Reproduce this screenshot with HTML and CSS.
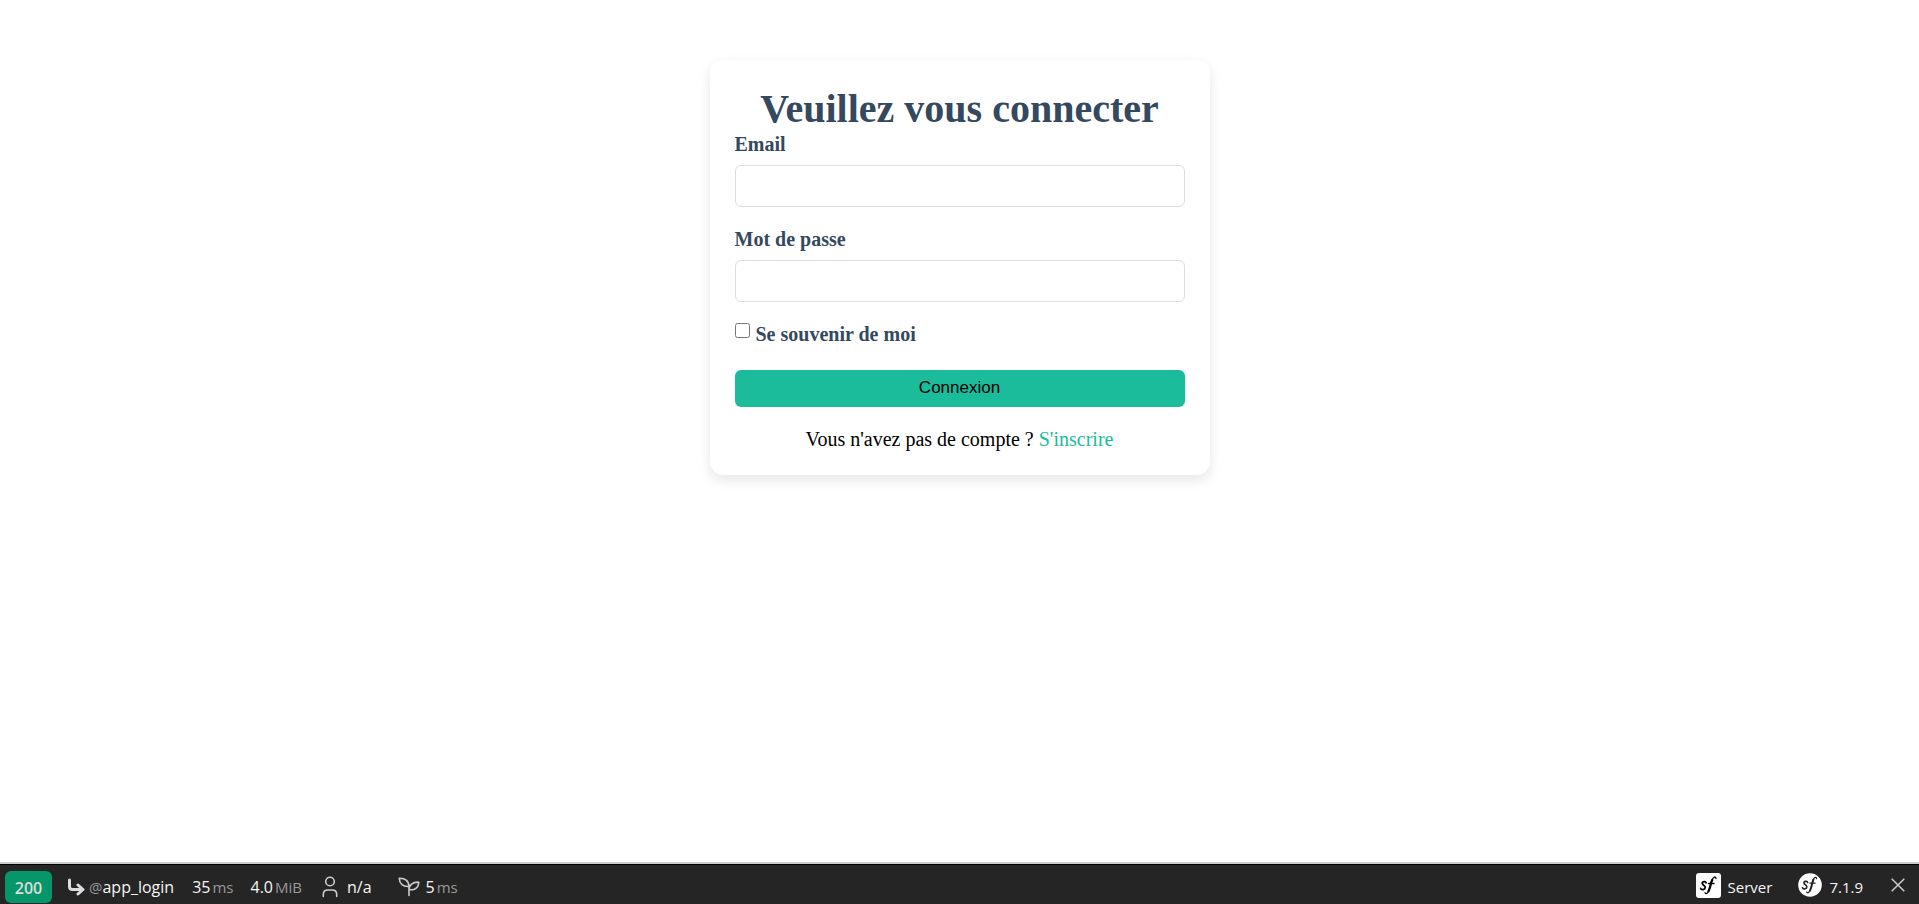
FILE: index.html
```html
<!DOCTYPE html>
<html lang="fr">
<head>
<meta charset="utf-8">
<title>Connexion</title>
<link rel="stylesheet" href="styles.css">
</head>
<body>
<main class="login">
  <form class="login-card">
    <h1 class="login-title">Veuillez vous connecter</h1>
    <div class="field">
      <label class="field-label" for="email">Email</label>
      <input class="field-input" id="email" type="email" name="email">
    </div>
    <div class="field">
      <label class="field-label" for="password">Mot de passe</label>
      <input class="field-input" id="password" type="password" name="password">
    </div>
    <div class="remember">
      <input class="remember-box" id="remember" type="checkbox" name="remember">
      <label class="remember-label" for="remember">Se souvenir de moi</label>
    </div>
    <button class="submit" type="submit">Connexion</button>
    <p class="signup">Vous n'avez pas de compte ? <a class="signup-link" href="#">S'inscrire</a></p>
  </form>
</main>
<footer class="toolbar">
  <div class="toolbar-group toolbar-metrics">
    <span class="status">200</span>
    <span class="item item-route">
      <svg viewBox="0 0 18 18" width="18" height="18" fill="none" stroke="#ddd" stroke-width="3" stroke-linecap="round" stroke-linejoin="round"><path d="M2.500 2v6.500q0 3 3 3H15M11 7l5 4.500-5 4.500"/></svg>
      <span><span class="at">@</span><span class="value">app_login</span></span>
    </span>
    <span class="item item-time"><span><span class="value">35</span><span class="unit">ms</span></span></span>
    <span class="item item-memory"><span><span class="value">4.0</span><span class="unit">MiB</span></span></span>
    <span class="item item-user">
      <svg viewBox="0 0 16 22" width="16" height="22" fill="none" stroke="#ccc" stroke-width="1.600" stroke-linecap="round"><circle cx="8" cy="5.500" r="4.300"/><path d="M1.300 20.500v-2q0-4.500 4.500-4.500h4.400q4.500 0 4.500 4.500v2"/></svg>
      <span class="value">n/a</span>
    </span>
    <span class="item item-twig">
      <svg viewBox="0 0 22 20" width="22" height="20" fill="none" stroke="#ccc" stroke-width="1.600" stroke-linecap="round" stroke-linejoin="round"><path d="M11 18.500v-8.500M11 9.500C5 10 1.500 7 1.200 1.200 7 1 10.800 3.500 11 9.500ZM11.200 12.500C11 8 14.500 4.800 20.800 5.200 20.500 10.800 16.500 13.800 11.200 12.500Z"/></svg>
      <span><span class="value">5</span><span class="unit">ms</span></span>
    </span>
  </div>
  <div class="toolbar-group toolbar-info">
    <span class="item item-server">
      <svg viewBox="0 0 25 25" width="25" height="25"><rect width="25" height="25" rx="3" fill="#fff"/><g fill="none" stroke="#000" stroke-linecap="round" stroke-linejoin="round"><path stroke-width="1.800" d="M10 9.800C9.600 7.900 5.900 8.500 6.300 10.700 6.600 12.200 9.300 12.400 9.200 14.500 9.100 16.800 5.200 17.400 4.700 15.400"/><path stroke-width="2.300" d="M16.200 7C14.700 10 14.400 14.500 12.500 18.300"/><path stroke-width="1.300" d="M20 5.500C19.700 3 17.200 3.800 16.200 7M12.500 18.300C11.500 20.600 9.800 21.300 9 19.800M12.400 10.500h5.600"/></g></svg>
      <span class="value">Server</span>
    </span>
    <span class="item item-version">
      <svg viewBox="0 0 25 25" width="24" height="24"><circle cx="12.500" cy="12.500" r="12.300" fill="#fff"/><g fill="none" stroke="#222" stroke-linecap="round" stroke-linejoin="round"><path stroke-width="1.700" d="M10 9.800C9.600 7.900 5.900 8.500 6.300 10.700 6.600 12.200 9.300 12.400 9.200 14.500 9.100 16.800 5.200 17.400 4.700 15.400"/><path stroke-width="2.100" d="M16 7C14.700 10 14.400 14.500 12.500 18.300"/><path stroke-width="1.300" d="M19.300 5.800C19 3.700 17 4.200 16 7M12.500 18.300C11.500 20.600 9.800 21.300 9 19.800M12.400 10.500h5.400"/></g></svg>
      <span class="value">7.1.9</span>
    </span>
    <button class="close" type="button" aria-label="Fermer">
      <svg viewBox="0 0 14 14" width="14" height="14" stroke="#ccc" stroke-width="1.500"><path d="M.7.700l12.600 12.600M13.300.700L.7 13.300"/></svg>
    </button>
  </div>
</footer>
</body>
</html>
```
FILE: styles.css
```css
* { box-sizing: border-box; }

body {
  margin: 0;
  min-height: 100vh;
  display: flex;
  flex-direction: column;
  background: #fff;
  color: #000;
  font-family: "Liberation Serif", "Times New Roman", serif;
  font-size: 20px;
}

.login {
  flex: 1;
  padding: 60px 20px;
}

.login-card {
  max-width: 500px;
  margin: 0 auto;
  padding: 25px 25px 24px;
  background: #fff;
  border-radius: 13px;
  box-shadow: 0 5px 13px rgba(0, 0, 0, 0.1);
}

.login-title {
  margin: 0;
  color: #34495e;
  font-size: 40px;
  line-height: 48px;
  text-align: center;
}

.field { margin-bottom: 21px; }

.field-label,
.remember-label {
  color: #34495e;
  font-weight: bold;
  line-height: 23px;
}

.field-label {
  display: block;
  margin-bottom: 9px;
}

.field-input {
  display: block;
  width: 100%;
  height: 42px;
  padding: 10px;
  border: 1px solid #ddd;
  border-radius: 6px;
  font-size: 17px;
}

.remember {
  display: flex;
  align-items: flex-start;
  gap: 6px;
  margin-bottom: 24px;
}

.remember-box {
  width: 15px;
  height: 15px;
  margin: 0;
}

.submit {
  display: block;
  width: 100%;
  height: 37px;
  padding: 0 0 2px;
  border: 0;
  border-radius: 6px;
  background: #1abc9c;
  color: #000;
  font-family: "Liberation Sans", Arial, sans-serif;
  font-size: 17px;
}

.signup {
  margin: 21px 0 0;
  line-height: 23px;
  text-align: center;
}

.signup-link {
  color: #1abc9c;
  text-decoration: none;
}

.toolbar {
  display: flex;
  justify-content: space-between;
  height: 40px;
  padding: 0 14px 0 5px;
  border-top: 1px solid #000;
  background: #252525;
  box-shadow: 0 -2px 0 #ccc;
  font-family: "Open Sans", "Noto Sans", sans-serif;
  font-size: 16px;
}

.toolbar-group,
.item {
  display: flex;
  align-items: center;
}

.toolbar-metrics { padding-top: 5px; }

.toolbar-info {
  padding-top: 1px;
  font-size: 15px;
}

.toolbar-info .value { padding-top: 4px; }

.status {
  width: 47px;
  height: 32px;
  border-radius: 6px;
  background: #059669;
  color: #ddd;
  font-weight: 600;
  line-height: 34px;
  text-align: center;
}

.value { color: #f5f5f5; }
.at { color: #999; font-size: 15px; }
.unit { margin-left: 2px; color: #999; font-size: 15px; }

.item-route { margin-left: 15px; gap: 4px; }
.item-time { margin-left: 18px; }
.item-memory { margin-left: 17px; }
.item-user { margin-left: 20px; gap: 9px; }
.item-twig { margin-left: 26px; gap: 6px; }
.item-server { gap: 7px; }
.item-version { margin-left: 26px; gap: 7px; }

.close {
  display: flex;
  margin-left: 28px;
  padding: 0;
  border: 0;
  background: none;
}
```
